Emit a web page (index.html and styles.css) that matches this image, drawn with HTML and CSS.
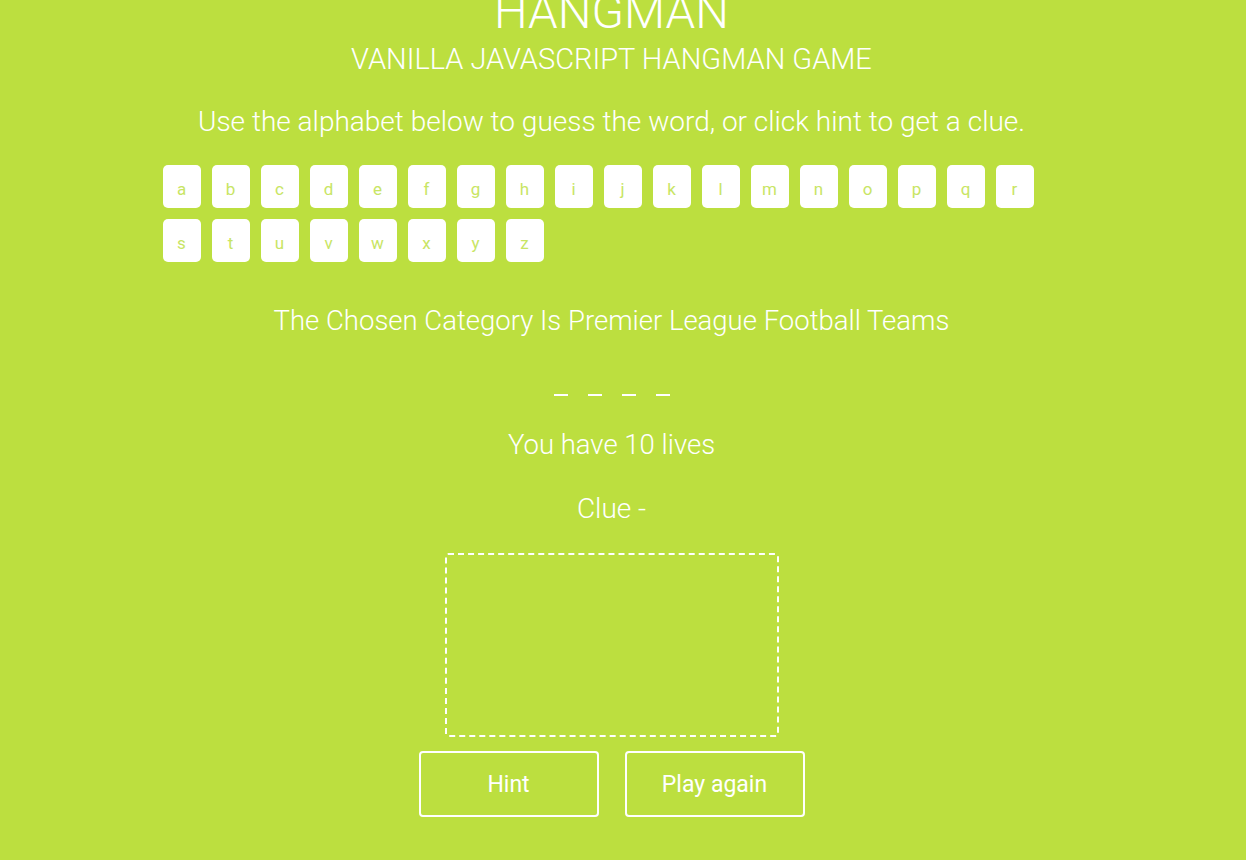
FILE: index.html
```html
<!DOCTYPE html>
<html lang="en">
<head>
<meta charset="utf-8">
<title>Hangman</title>
<link rel="stylesheet" href="styles.css">
</head>
<body>
<div class="page">
  <div class="container">
    <h1 class="title">HANGMAN</h1>
    <h2 class="subtitle">VANILLA JAVASCRIPT HANGMAN GAME</h2>
    <p class="intro">Use the alphabet below to guess the word, or click hint to get a clue.</p>
    <ul class="alphabet">
      <li class="key">a</li><li class="key">b</li><li class="key">c</li><li class="key">d</li><li class="key">e</li><li class="key">f</li><li class="key">g</li><li class="key">h</li><li class="key">i</li><li class="key">j</li><li class="key">k</li><li class="key">l</li><li class="key">m</li><li class="key">n</li><li class="key">o</li><li class="key">p</li><li class="key">q</li><li class="key">r</li>
      <li class="key">s</li><li class="key">t</li><li class="key">u</li><li class="key">v</li><li class="key">w</li><li class="key">x</li><li class="key">y</li><li class="key">z</li>
    </ul>
    <p class="category">The Chosen Category Is Premier League Football Teams</p>
    <ul class="word">
      <li class="guess"></li><li class="guess"></li><li class="guess"></li><li class="guess"></li>
    </ul>
    <p class="lives">You have 10 lives</p>
    <p class="clue">Clue -</p>
    <div class="stage"></div>
    <div class="actions">
      <button class="btn">Hint</button>
      <button class="btn">Play again</button>
    </div>
  </div>
</div>
</body>
</html>
```
FILE: styles.css
```css
html, body {
  margin: 0;
  padding: 0;
}
body {
  background: #bcdf3f;
  color: #ffffff;
  font-family: Roboto, "Liberation Sans", sans-serif;
  font-weight: 300;
  overflow: hidden;
}
.page {
  width: 1223px;
}
.container {
  width: 900px;
  margin: 0 auto;
  text-align: center;
}
.title {
  margin: -11px 0 0;
  font-size: 47.5px;
  line-height: 46px;
  font-weight: 300;
}
.subtitle {
  margin: 9px 0 0;
  font-size: 29px;
  line-height: 30px;
  font-weight: 300;
}
.intro {
  margin: 33px 0 0;
  font-size: 28px;
  line-height: 30px;
}
.alphabet {
  list-style: none;
  margin: 28px 0 0;
  padding: 0 0 0 1px;
  display: grid;
  grid-template-columns: repeat(18, 38px);
  gap: 11px;
}
.key {
  box-sizing: border-box;
  height: 43px;
  padding-top: 6px;
  line-height: 37px;
  background: #ffffff;
  border-radius: 5px;
  color: #c8e564;
  font-size: 17px;
  font-weight: 400;
}
.category {
  margin: 44px 0 0;
  font-size: 27.5px;
  line-height: 30px;
}
.word {
  list-style: none;
  margin: 40px 0 0;
  padding: 0;
  display: flex;
  justify-content: center;
  gap: 20px;
}
.guess {
  width: 14px;
  height: 18px;
  border-bottom: 2px solid #ffffff;
}
.lives {
  margin: 34px 0 0;
  font-size: 27.5px;
  line-height: 30px;
}
.clue {
  margin: 34px 0 0;
  font-size: 28px;
  line-height: 30px;
}
.stage {
  box-sizing: border-box;
  width: 334px;
  height: 184px;
  margin: 29px auto 0;
  border: 2px dashed #ffffff;
  border-radius: 3px;
}
.actions {
  margin-top: 14px;
  display: flex;
  justify-content: center;
  gap: 26px;
}
.btn {
  box-sizing: border-box;
  width: 180px;
  height: 66px;
  background: transparent;
  border: 2px solid #ffffff;
  border-radius: 4px;
  color: #ffffff;
  font-family: Roboto, "Liberation Sans", sans-serif;
  font-size: 23px;
  font-weight: 400;
}
```
